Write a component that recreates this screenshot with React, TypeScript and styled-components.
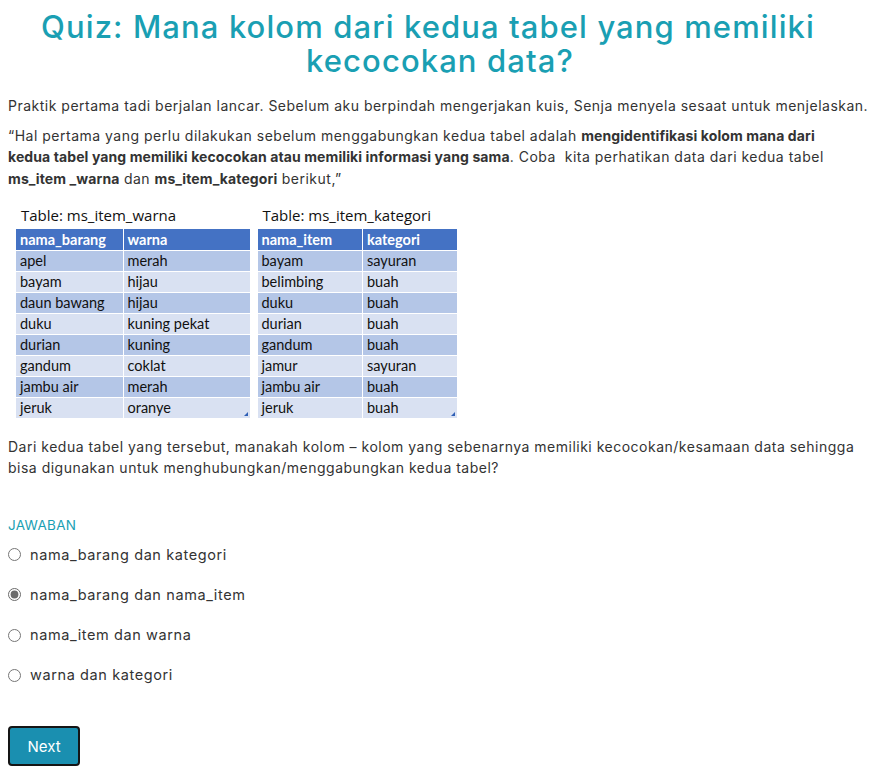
import React from "react";
import styled, { createGlobalStyle } from "styled-components";

const Global = createGlobalStyle`
  body {
    margin: 8px;
    font-family: Inter, "Open Sans", sans-serif;
    color: #333;
    background: #fff;
  }
`;

const Page = styled.div`
  display: flex;
  flex-direction: column;
`;

const Title = styled.h1`
  margin: 2px 0 0;
  display: flex;
  flex-direction: column;
  align-items: center;
  font-family: Inter, sans-serif;
  font-weight: 500;
  font-size: 31px;
  line-height: 34px;
  color: #1a9fb3;
  letter-spacing: 1.1px;
`;

const TitleLine = styled.span<{ $pr?: number }>`
  padding-right: ${(p) => p.$pr ?? 0}px;
`;

const Para = styled.p<{ $mt?: number }>`
  margin: ${(p) => p.$mt ?? 0}px 0 0;
  font-size: 14px;
  line-height: 21.5px;
  letter-spacing: 0.5px;
  color: #333;
  b {
    font-weight: 700;
    letter-spacing: 0.1px;
  }
`;

const Tables = styled.div`
  display: flex;
  gap: 7px;
  margin: 17px 0 0 8px;
`;

const TableBox = styled.div`
  display: flex;
  flex-direction: column;
  position: relative;
`;

const Caption = styled.div`
  font-family: "Open Sans", sans-serif;
  font-size: 15px;
  line-height: 18px;
  color: #111;
  padding-left: 5px;
  margin-bottom: 5px;
`;

const Grid = styled.table`
  border-collapse: collapse;
  font-family: Lato, sans-serif;
  font-size: 14.5px;
  color: #111;
`;

const HeadCell = styled.th<{ $w: number }>`
  width: ${(p) => p.$w}px;
  height: 21px;
  padding: 0 4px;
  box-sizing: border-box;
  text-align: left;
  font-weight: 700;
  color: #fff;
  background: #4472c4;
  border-right: 1px solid #fff;
  border-bottom: 1px solid #fff;
`;

const Cell = styled.td<{ $alt: boolean }>`
  height: 21px;
  padding: 0 4px;
  box-sizing: border-box;
  background: ${(p) => (p.$alt ? "#d9e1f2" : "#b4c6e7")};
  border-right: 1px solid #fff;
  border-bottom: 1px solid #fff;
`;

const Handle = styled.span`
  position: absolute;
  right: 3px;
  bottom: 3px;
  width: 0;
  height: 0;
  border-left: 4px solid transparent;
  border-bottom: 4px solid #2f5fb5;
`;

const Label = styled.div`
  margin-top: 37px;
  font-size: 13.5px;
  line-height: 18px;
  color: #1a9fb3;
  letter-spacing: 0.3px;
`;

const Options = styled.div`
  display: flex;
  flex-direction: column;
  gap: 20.3px;
  margin-top: 11px;
`;

const Option = styled.label`
  display: flex;
  align-items: center;
  gap: 9px;
  font-size: 14.5px;
  line-height: 20px;
  letter-spacing: 0.6px;
  color: #333;
  input {
    margin: 0;
    width: 13px;
    height: 13px;
    accent-color: #6b6b6b;
  }
`;

const NextButton = styled.button`
  margin-top: 41px;
  align-self: flex-start;
  width: 72px;
  height: 40px;
  background: #1a8fb0;
  color: #fff;
  border: 2px solid #151515;
  border-radius: 4px;
  font-family: Inter, sans-serif;
  font-size: 15px;
  cursor: pointer;
`;

type Tbl = { caption: string; cols: [string, string]; widths: [number, number]; rows: [string, string][] };

const tables: Tbl[] = [
  {
    caption: "Table: ms_item_warna",
    cols: ["nama_barang", "warna"],
    widths: [107, 127],
    rows: [
      ["apel", "merah"],
      ["bayam", "hijau"],
      ["daun bawang", "hijau"],
      ["duku", "kuning pekat"],
      ["durian", "kuning"],
      ["gandum", "coklat"],
      ["jambu air", "merah"],
      ["jeruk", "oranye"],
    ],
  },
  {
    caption: "Table: ms_item_kategori",
    cols: ["nama_item", "kategori"],
    widths: [105, 95],
    rows: [
      ["bayam", "sayuran"],
      ["belimbing", "buah"],
      ["duku", "buah"],
      ["durian", "buah"],
      ["gandum", "buah"],
      ["jamur", "sayuran"],
      ["jambu air", "buah"],
      ["jeruk", "buah"],
    ],
  },
];

const options = [
  "nama_barang dan kategori",
  "nama_barang dan nama_item",
  "nama_item dan warna",
  "warna dan kategori",
];

export default function App() {
  return (
    <Page>
      <Global />
      <Title>
        <TitleLine $pr={24}>Quiz: Mana kolom dari kedua tabel yang memiliki</TitleLine>
        <TitleLine>kecocokan data?</TitleLine>
      </Title>
      <Para $mt={17}>
        Praktik pertama tadi berjalan lancar. Sebelum aku berpindah mengerjakan kuis, Senja menyela sesaat untuk menjelaskan.
      </Para>
      <Para $mt={8}>
        “Hal pertama yang perlu dilakukan sebelum menggabungkan kedua tabel adalah{" "}
        <b>mengidentifikasi kolom mana dari</b>
        <br />
        <b>kedua tabel yang memiliki kecocokan atau memiliki informasi yang sama</b>. Coba&nbsp; kita perhatikan data dari kedua
        tabel
        <br />
        <b>ms_item _warna</b> dan <b>ms_item_kategori</b> berikut,”
      </Para>
      <Tables>
        {tables.map((t) => (
          <TableBox key={t.caption}>
            <Caption>{t.caption}</Caption>
            <Grid>
              <thead>
                <tr>
                  <HeadCell $w={t.widths[0]}>{t.cols[0]}</HeadCell>
                  <HeadCell $w={t.widths[1]}>{t.cols[1]}</HeadCell>
                </tr>
              </thead>
              <tbody>
                {t.rows.map((r, i) => (
                  <tr key={i}>
                    <Cell $alt={i % 2 === 1}>{r[0]}</Cell>
                    <Cell $alt={i % 2 === 1}>{r[1]}</Cell>
                  </tr>
                ))}
              </tbody>
            </Grid>
            <Handle />
          </TableBox>
        ))}
      </Tables>
      <Para $mt={17}>
        Dari kedua tabel yang tersebut, manakah kolom – kolom yang sebenarnya memiliki kecocokan/kesamaan data sehingga bisa
        digunakan untuk menghubungkan/menggabungkan kedua tabel?
      </Para>
      <Label>JAWABAN</Label>
      <Options>
        {options.map((o, i) => (
          <Option key={o}>
            <input type="radio" name="jawaban" defaultChecked={i === 1} />
            {o}
          </Option>
        ))}
      </Options>
      <NextButton>Next</NextButton>
    </Page>
  );
}
